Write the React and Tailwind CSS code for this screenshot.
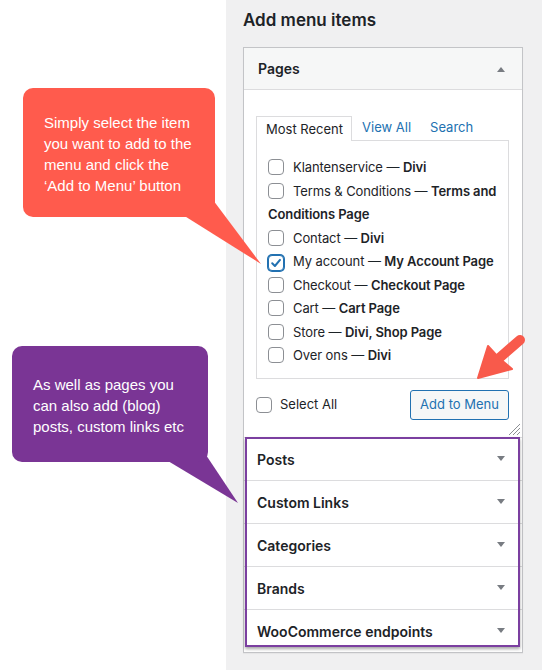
import React from "react";

const PAGES = [
  { title: "Klantenservice", meta: ["Divi"] },
  { title: "Terms & Conditions", meta: ["Terms and", "Conditions Page"] },
  { title: "Contact", meta: ["Divi"] },
  { title: "My account", meta: ["My Account Page"], checked: true },
  { title: "Checkout", meta: ["Checkout Page"] },
  { title: "Cart", meta: ["Cart Page"] },
  { title: "Store", meta: ["Divi, Shop Page"] },
  { title: "Over ons", meta: ["Divi"] },
];

const SECTIONS = ["Posts", "Custom Links", "Categories", "Brands", "WooCommerce endpoints"];

function Caret({ up }) {
  return (
    <svg width="10" height="6" viewBox="0 0 10 6" className="shrink-0">
      <path d={up ? "M1 6 L5 1 L9 6 Z" : "M1 0 L9 0 L5 5 Z"} fill="#787c82" />
    </svg>
  );
}

function Checkbox({ checked }) {
  return (
    <span
      className={`inline-flex h-4 w-4 shrink-0 items-center justify-center rounded-[4px] border bg-white align-[-3px] ${
        checked ? "border-[#2271b1] shadow-[0_0_0_1px_#2271b1]" : "border-[#8c8f94]"
      }`}
    >
      {checked && (
        <svg width="12" height="12" viewBox="0 0 12 12">
          <path d="M2.2 6.3 L4.9 9 L10 2.9" fill="none" stroke="#2271b1" strokeWidth="2" strokeLinecap="round" strokeLinejoin="round" />
        </svg>
      )}
    </span>
  );
}

function Bubble({ className, children }) {
  return (
    <div
      className={`absolute rounded-[10px] text-[15px] leading-[21px] text-white ${className}`}
      style={{ fontFamily: '"Liberation Sans", Arial, sans-serif' }}
    >
      {children}
    </div>
  );
}

export default function App() {
  return (
    <div
      className="relative flex h-[670px] w-[542px] overflow-hidden bg-white text-[#1d2327]"
      style={{ fontFamily: 'Inter, "Noto Sans", sans-serif' }}
    >
      {/* left white gutter */}
      <div className="w-[226px] shrink-0 bg-white" />

      {/* menu items column */}
      <div className="flex-1 bg-[#f0f0f1] pl-[17px] pt-[8px]">
        <h2 className="text-[17px] font-semibold leading-[24px]">Add menu items</h2>

        <div className="mt-[15px] w-[280px] border border-[#c3c4c7] bg-white shadow-[0_1px_1px_rgba(0,0,0,0.04)]">
          {/* Pages header */}
          <div className="flex h-[42px] items-center justify-between border-b border-[#dcdcde] bg-[#f6f7f7] pl-[14px] pr-[16px]">
            <span className="text-[14px] font-semibold">Pages</span>
            <Caret up />
          </div>

          {/* Pages body */}
          <div className="relative px-[12px] pb-[17px] pt-[25px]">
            <div className="flex items-end text-[13px] leading-[24px]">
              <div className="relative z-10 -mb-px h-[25px] border border-b-0 border-[#dcdcde] bg-white pl-[9px] pr-[8px]">
                Most Recent
              </div>
              <span className="ml-[10px] pb-[1px] text-[#2271b1]">View All</span>
              <span className="ml-[19px] pb-[1px] text-[#2271b1]">Search</span>
            </div>

            <div className="h-[239px] w-[253px] border border-[#dcdcde] bg-white px-[11px] pt-[15px]">
              <ul className="text-[13px] leading-[23.5px] tracking-[-0.1px]">
                {PAGES.map((p) => (
                  <li key={p.title} className="whitespace-nowrap">
                    <Checkbox checked={p.checked} />
                    <span className="ml-[9px]">{p.title} — </span>
                    <span className="font-semibold">
                      {p.meta[0]}
                      {p.meta[1] && (
                        <>
                          <br />
                          {p.meta[1]}
                        </>
                      )}
                    </span>
                  </li>
                ))}
              </ul>
            </div>

            <div className="mt-[11px] flex w-[253px] items-center justify-between">
              <label className="flex items-center gap-[8px] text-[13px]">
                <Checkbox />
                Select All
              </label>
              <button className="h-[30px] w-[99px] rounded-[3px] border border-[#2271b1] bg-[#f6f7f7] text-[13px] text-[#2271b1]">
                Add to Menu
              </button>
            </div>

            {/* resize grip */}
            <svg width="14" height="14" viewBox="0 0 14 14" className="absolute bottom-[1px] right-[1px]">
              <path d="M13 2 L2 13 M13 6 L6 13 M13 10 L10 13" stroke="#8c8f94" strokeWidth="1" />
            </svg>
          </div>

          {/* collapsed sections */}
          {SECTIONS.map((s) => (
            <div
              key={s}
              className="flex h-[43px] items-center justify-between border-t border-[#dcdcde] pl-[13px] pr-[16px]"
            >
              <span className="text-[14px] font-semibold">{s}</span>
              <Caret />
            </div>
          ))}
        </div>
      </div>

      {/* annotation: purple outline round the sections */}
      <div className="pointer-events-none absolute left-[245px] top-[437px] h-[210px] w-[275px] border-2 border-[#7b3fa0] shadow-[0_2px_3px_rgba(0,0,0,0.35)]" />

      {/* annotation tails and arrow */}
      <svg width="542" height="670" viewBox="0 0 542 670" className="pointer-events-none absolute left-0 top-0">
        <polygon points="175,210 213,200 261,264" fill="#ff5b4d" />
        <polygon points="158,455 204,452 238,503" fill="#7a3595" />
        <line x1="497" y1="360" x2="520" y2="340" stroke="#f85a4b" strokeWidth="10" strokeLinecap="round" />
        <polygon points="478,378 488,346 499,358 512,369" fill="#f85a4b" stroke="#f85a4b" strokeWidth="2" strokeLinejoin="round" />
      </svg>

      <Bubble className="left-[23px] top-[88px] h-[129px] w-[192px] bg-[#ff5b4d] pl-[21px] pt-[24px]">
        Simply select the item
        <br />
        you want to add to the
        <br />
        menu and click the
        <br />
        ‘Add to Menu’ button
      </Bubble>

      <Bubble className="left-[12px] top-[346px] h-[116px] w-[196px] bg-[#7a3595] pl-[21px] pt-[28px]">
        As well as pages you
        <br />
        can also add (blog)
        <br />
        posts, custom links etc
      </Bubble>
    </div>
  );
}
